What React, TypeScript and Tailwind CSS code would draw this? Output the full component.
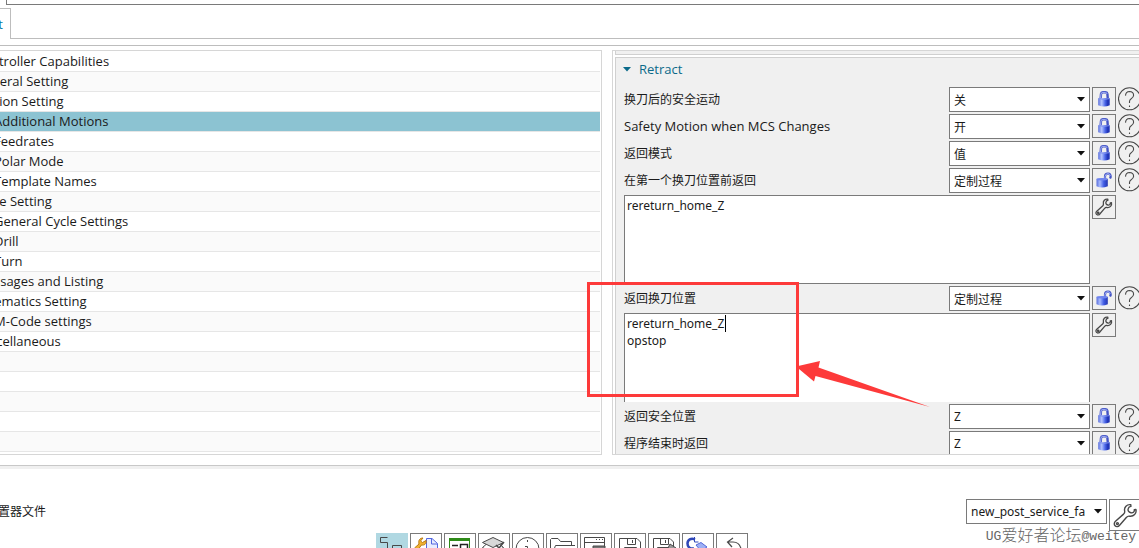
import type { ReactNode } from 'react';

type TreeItem = { label: string; child?: boolean; selected?: boolean };

const tree: TreeItem[] = [
  { label: 'Controller Capabilities' },
  { label: 'General Setting' },
  { label: 'Motion Setting' },
  { label: 'Additional Motions', child: true, selected: true },
  { label: 'Feedrates', child: true },
  { label: 'Polar Mode', child: true },
  { label: 'Template Names', child: true },
  { label: 'Cycle Setting' },
  { label: 'General Cycle Settings', child: true },
  { label: 'Drill', child: true },
  { label: 'Turn', child: true },
  { label: 'Messages and Listing' },
  { label: 'Kinematics Setting' },
  { label: 'M-Code settings', child: true },
  { label: 'Miscellaneous' },
];

const blankRows = [0, 1, 2, 3, 4];

const LATIN = "font-['Open_Sans','Noto_Sans_CJK_SC',sans-serif] text-[13px]";
const FIELD = "font-['Noto_Sans','Noto_Sans_CJK_SC',sans-serif] text-[12px]";
const CJK = "font-['Noto_Sans_CJK_SC',sans-serif] text-[12px]";

const isLatin = (s: string) => /^[\x20-\x7e]+$/.test(s);

function LockIcon() {
  return (
    <svg width="14" height="16" viewBox="0 0 14 16" aria-hidden="true">
      <defs>
        <linearGradient id="lockBody" x1="0" x2="1" y1="0" y2="0">
          <stop offset="0" stopColor="#5a6fdc" />
          <stop offset="0.3" stopColor="#b4c4ff" />
          <stop offset="0.6" stopColor="#4a66e8" />
          <stop offset="0.85" stopColor="#1a2cb0" />
          <stop offset="1" stopColor="#3a50c8" />
        </linearGradient>
      </defs>
      <path d="M3.6 8L4 2.8Q4.2 1.3 5.8 1.3H8.6Q10.2 1.3 10.4 2.8L10.8 8" fill="none" stroke="#4353c4" strokeWidth="2.4" />
      <path d="M3.6 7L4 3Q4.2 1.5 5.8 1.4H8.6Q9.8 1.5 10 3" fill="none" stroke="#a3b1f6" strokeWidth="1" />
      <path d="M1.2 7.2H12.8V14.2Q7 16.8 1.2 14.2Z" fill="url(#lockBody)" />
      <path d="M1.5 7.6Q7 9.2 12.5 7.6" fill="none" stroke="#8093f0" strokeWidth="1" />
    </svg>
  );
}

function UnlockIcon() {
  return (
    <svg width="16" height="16" viewBox="0 0 16 16" aria-hidden="true">
      <defs>
        <linearGradient id="unlockBody" x1="0" x2="1" y1="0" y2="0">
          <stop offset="0" stopColor="#5a6fdc" />
          <stop offset="0.3" stopColor="#a9bbff" />
          <stop offset="0.65" stopColor="#3f5be4" />
          <stop offset="1" stopColor="#2536b0" />
        </linearGradient>
      </defs>
      <path d="M9 8V4.5Q9 1.5 12 1.5Q14.8 1.6 14.7 5L14 6.5" fill="none" stroke="#4353c4" strokeWidth="2.2" />
      <path d="M9 7V4.5Q9.2 1.9 12 1.6Q14 1.7 14.2 4" fill="none" stroke="#a3b1f6" strokeWidth="1" />
      <path d="M0.5 6.8H11.8V14.2Q6 16.6 0.5 14.2Z" fill="url(#unlockBody)" />
      <ellipse cx="6.1" cy="7.2" rx="5.5" ry="1.2" fill="#6f84ee" />
    </svg>
  );
}

function WrenchIcon({ big = false }: { big?: boolean }) {
  return (
    <svg
      width={big ? 25 : 18}
      height={big ? 25 : 18}
      viewBox="0 0 18 18"
      fill="none"
      stroke="#484848"
      strokeWidth={big ? 1 : 1.3}
      strokeLinejoin="round"
      aria-hidden="true"
    >
      <path d="M12.8 1.2C10 0.8 7.8 3 8.4 5.8C8.6 6.8 8.2 7.4 7.6 8L1.8 13.2C0.7 14.2 0.7 15.6 1.5 16.4C2.4 17.3 3.8 17.1 4.6 16.2L9.6 10.4C10.3 9.6 11 9.3 12 9.5C14.8 9.9 17.2 7.6 16.5 4.7L15.3 4.9C15.6 6.3 14.3 7.4 12.9 7C11.2 6.6 10.5 5.3 11 4C11.3 3 12 2.5 12.9 2.4Z" />
      <circle cx="3.2" cy="14.8" r="0.7" />
    </svg>
  );
}

function HelpButton() {
  return (
    <button type="button" aria-label="Help" className="flex w-[21px] shrink-0">
      <svg width="24" height="24" viewBox="0 0 24 24" fill="none" stroke="#484848" strokeWidth="1.1" className="shrink-0" aria-hidden="true">
        <circle cx="11.5" cy="11.8" r="11" />
        <path d="M7.5 8.6Q7.7 4.6 11.5 4.5Q15.6 4.7 15.6 8.2Q15.5 10.3 13.2 11.7Q11.5 12.8 11.5 14.4V16" />
        <path d="M11.5 18.5V20" />
      </svg>
    </button>
  );
}

function IconButton({ label, children }: { label: string; children: ReactNode }) {
  return (
    <button
      type="button"
      aria-label={label}
      className="flex size-6 shrink-0 items-center justify-center border border-[#7a7a7a] bg-[#f0f0f0]"
    >
      {children}
    </button>
  );
}

function Combo({ id, value }: { id: string; value: string }) {
  return (
    <div className="grid w-[141px] shrink-0 items-center">
      <select
        id={id}
        defaultValue={value}
        className={`col-start-1 row-start-1 h-[25px] w-full appearance-none rounded-none border border-[#7a7a7a] bg-white px-1 leading-[17px] text-[#1a1a1a] ${isLatin(value) ? FIELD : CJK}`}
      >
        <option>{value}</option>
      </select>
      <svg width="8" height="5" viewBox="0 0 8 5" className="pointer-events-none col-start-1 row-start-1 mr-[5px] justify-self-end" aria-hidden="true">
        <path d="M0 0H8L4 4.5Z" fill="#111" />
      </svg>
    </div>
  );
}

function SettingRow({ id, label, value, open = false }: { id: string; label: string; value: string; open?: boolean }) {
  return (
    <div className="flex h-[25px] shrink-0 gap-[2px]">
      <label htmlFor={id} className={`flex-1 whitespace-nowrap pt-[3px] leading-[18px] ${isLatin(label) ? LATIN : CJK}`}>
        {label}
      </label>
      <Combo id={id} value={value} />
      <IconButton label={open ? 'Unlocked' : 'Locked'}>{open ? <UnlockIcon /> : <LockIcon />}</IconButton>
      <HelpButton />
    </div>
  );
}

function CodeRow({ label, text, cut = false }: { label: string; text: string; cut?: boolean }) {
  return (
    <div className="flex shrink-0 gap-[2px] pr-[23px]">
      <textarea
        aria-label={label}
        defaultValue={text}
        spellCheck={false}
        className={`h-[89px] flex-1 resize-none rounded-none border border-[#7a7a7a] bg-white px-[2px] py-px leading-[17px] outline-none ${FIELD} ${cut ? 'border-b-0' : ''}`}
      />
      <IconButton label="Edit">
        <WrenchIcon />
      </IconButton>
    </div>
  );
}

const toolIcons: { name: string; icon: ReactNode }[] = [
  {
    name: 'Structure',
    icon: <path d="M10.5 3.5H3.5V8.5H10.5V15.5H3.5M15.5 11.5H24.5V18.5H15.5Z" />,
  },
  {
    name: 'Edit file',
    icon: (
      <>
        <path d="M15.5 4.5H21L26.5 9.5V28H15.5Z" fill="#e9edff" stroke="#5367e0" />
        <path d="M20.5 4.5V10H26.5" stroke="#5367e0" />
        <path d="M12 4L9.5 7L11.5 8.5L15 6.5C16 10 13 11.5 10.5 11L6 17L3.5 14L8 10C7 6 9 4 12 4Z" fill="#f0b030" stroke="#b87a10" />
      </>
    ),
  },
  {
    name: 'Window',
    icon: (
      <>
        <path d="M4.5 5H24.5V26H4.5Z" fill="#fff" stroke="#2e8b18" />
        <path d="M4 5.5H25" stroke="#2e8b18" strokeWidth="3" />
        <path d="M7 11.5H13M15.5 10.5H22.5V15H15.5ZM7 15.5H13" stroke="#222" strokeWidth="1.5" />
      </>
    ),
  },
  {
    name: 'Layers',
    icon: (
      <>
        <path d="M3.5 8.5L14 3.5L24.5 8.5L14 13.5Z" fill="#d8d8d8" />
        <path d="M7 10.5L3.5 13.5L14 18.5L24.5 13.5L21 10.5" />
        <path d="M17 11L20 14L25 8" strokeWidth="1.5" />
      </>
    ),
  },
  {
    name: 'Information',
    icon: (
      <>
        <circle cx="14.5" cy="15" r="11.5" />
        <path d="M14.5 6V8M12 12.5H14.5V22" />
      </>
    ),
  },
  {
    name: 'Open',
    icon: <path d="M3.5 25V5.5L4.5 4.5H11L13.5 7.5H24.5V11.5M3.5 25L8.5 11.5H28" />,
  },
  {
    name: 'Properties',
    icon: (
      <>
        <path d="M3.5 3.5H23.5V25H3.5ZM3.5 8.5H23.5" />
        <path d="M15 5.5H16M18 5.5H19M21 5.5H22" />
        <path d="M12 12H24V16H12Z" fill="#777" />
      </>
    ),
  },
  {
    name: 'Save',
    icon: <path d="M4.5 4.5H22L25.5 8V25.5H4.5ZM12.5 4.5V10.5H20.5V4.5M17.5 6V9M9.5 25V13.5H21.5V25" />,
  },
  {
    name: 'Save as',
    icon: (
      <>
        <path d="M4.5 4.5H21L24.5 8V25.5H4.5ZM11.5 4.5V10.5H19.5V4.5M16.5 6V9M8.5 25V13.5H20" />
        <path d="M21 10L27 14L24 18L19 14Z" fill="#999" />
      </>
    ),
  },
  {
    name: 'Reload',
    icon: (
      <>
        <path d="M12 5.5C8 3.5 4.5 6 4.5 9.5C4.5 13.5 8 15.5 11 14" stroke="#3048b8" strokeWidth="2.5" />
        <path d="M11.5 3V8H15.5" stroke="#3048b8" />
        <path d="M13 11L18 8.5L24 13L18 17Z" fill="#9db0f5" stroke="#5468d8" />
      </>
    ),
  },
  {
    name: 'Undo',
    icon: <path d="M16 4L10.5 8L15 13M10.5 8H16C21 8 24 11 24.5 18" strokeWidth="1.2" />,
  },
];

export default function App() {
  return (
    <div className={`relative flex h-screen flex-col overflow-hidden bg-white text-[#1a1a1a] ${LATIN}`}>
      <header className="shrink-0">
        <div className="ml-[6px] h-[5px] border-b border-l border-[#7a7a7a]" />
        <div className="mt-[3px] flex h-[31px]">
          <button type="button" className="flex w-[11px] justify-end border-t border-r border-[#bdbdbd] pr-[7px] pt-[6px] leading-[18px] text-[#0a7ca5]">
            t
          </button>
          <div className="flex-1 border-b border-[#bdbdbd]" />
        </div>
      </header>

      <main className="mt-[6px] flex min-h-0 flex-1 gap-[10px] border-t border-b border-t-[#bdbdbd] border-b-[#c8c8c8] pt-1 pb-[10px]">
        <nav className="w-[602px] shrink-0 overflow-hidden border-t border-r border-b border-[#d6d6d6] pt-px pr-px">
          <ul>
            {tree.map((item) => (
              <li key={item.label} className={`h-5 border-b border-[#e6e6e6] ${item.selected ? 'bg-[#8cc3d2]' : 'odd:bg-white even:bg-[#fafafa]'}`}>
                <a href="#settings" className={`block whitespace-nowrap leading-[18px] ${item.child ? '-ml-[6px]' : '-ml-[25px]'}`}>
                  {item.label}
                </a>
              </li>
            ))}
            {blankRows.map((n) => (
              <li key={n} className="h-5 border-b border-[#e6e6e6] odd:bg-white even:bg-[#fafafa]" />
            ))}
          </ul>
        </nav>

        <section id="settings" className="flex min-w-0 flex-1 flex-col overflow-hidden border-t border-b border-l border-[#d6d6d6] pl-[2px]">
          <div className="h-1 shrink-0 border-b border-l border-[#d0d0d0] bg-[#f0f0f0]" />
          <div className="mt-[2px] flex min-h-0 flex-1 flex-col gap-[2px] overflow-hidden border-t border-l border-[#d0d0d0] bg-[#f0f0f0] pl-2">
            <h2 className="-ml-px flex h-[27px] shrink-0 items-start pt-[2px]">
              <button type="button" className="flex items-center gap-2 leading-[18px] text-[#0b6a8a]">
                <svg width="8" height="5" viewBox="0 0 8 5" aria-hidden="true">
                  <path d="M0 0H8L4 4.5Z" fill="#0b6a8a" />
                </svg>
                Retract
              </button>
            </h2>
            <SettingRow id="safe-after" label="换刀后的安全运动" value="关" />
            <SettingRow id="safe-mcs" label="Safety Motion when MCS Changes" value="开" />
            <SettingRow id="mode" label="返回模式" value="值" />
            <SettingRow id="before-first" label="在第一个换刀位置前返回" value="定制过程" open />
            <CodeRow label="在第一个换刀位置前返回" text="rereturn_home_Z" />
            <SettingRow id="tool-change" label="返回换刀位置" value="定制过程" open />
            <CodeRow label="返回换刀位置" text={'rereturn_home_Z\nopstop'} cut />
            <SettingRow id="safe-position" label="返回安全位置" value="Z" />
            <SettingRow id="program-end" label="程序结束时返回" value="Z" />
          </div>
        </section>
      </main>

      <footer className="h-[82px] shrink-0 border-t-[3px] border-[#f0f0f0] pt-[30px]">
        <div className="flex h-[34px] items-start">
          <label htmlFor="post-file" className={`-ml-[2px] flex-1 pt-[3px] leading-[18px] ${CJK}`}>
            置器文件
          </label>
          <Combo id="post-file" value="new_post_service_fa" />
          <button type="button" aria-label="Configure" className="-mr-[2px] ml-[2px] flex size-8 shrink-0 items-center justify-center border border-[#7a7a7a]">
            <WrenchIcon big />
          </button>
        </div>
        <div className="flex justify-center gap-[2px] pr-[15px]">
          {toolIcons.map((tool, i) => (
            <button
              key={tool.name}
              type="button"
              aria-label={tool.name}
              className={`size-8 border ${i === 0 ? 'border-[#b0d8e2] bg-[#b0d8e2]' : 'border-[#7a7a7a] bg-white'}`}
            >
              <svg width="30" height="30" viewBox="0 0 30 30" fill="none" stroke="#484848" aria-hidden="true">
                {tool.icon}
              </svg>
            </button>
          ))}
        </div>
      </footer>

      <div className="pointer-events-none absolute top-[315px] left-[725px] h-[17px] w-px bg-black" />
      <div className="pointer-events-none absolute top-[282px] left-[587px] h-[115px] w-[212px] border-[3px] border-[#fd3a3a]" />
      <svg className="pointer-events-none absolute top-[355px] left-[795px]" width="140" height="56" viewBox="0 0 140 56" aria-hidden="true">
        <path d="M1 11.5L25 6L23.5 12.5L135 52L20.5 21L19 26.5Z" fill="#fd3a3a" />
      </svg>
      <div className="pointer-events-none absolute right-[3px] bottom-[3px] flex items-center font-['Liberation_Mono','Noto_Sans_CJK_SC',monospace] text-[13px] leading-4 text-[#666]">
        <span>UG</span>
        <span className="text-[16px] font-light">爱好者论坛</span>
        <span>@weitey</span>
      </div>
    </div>
  );
}
